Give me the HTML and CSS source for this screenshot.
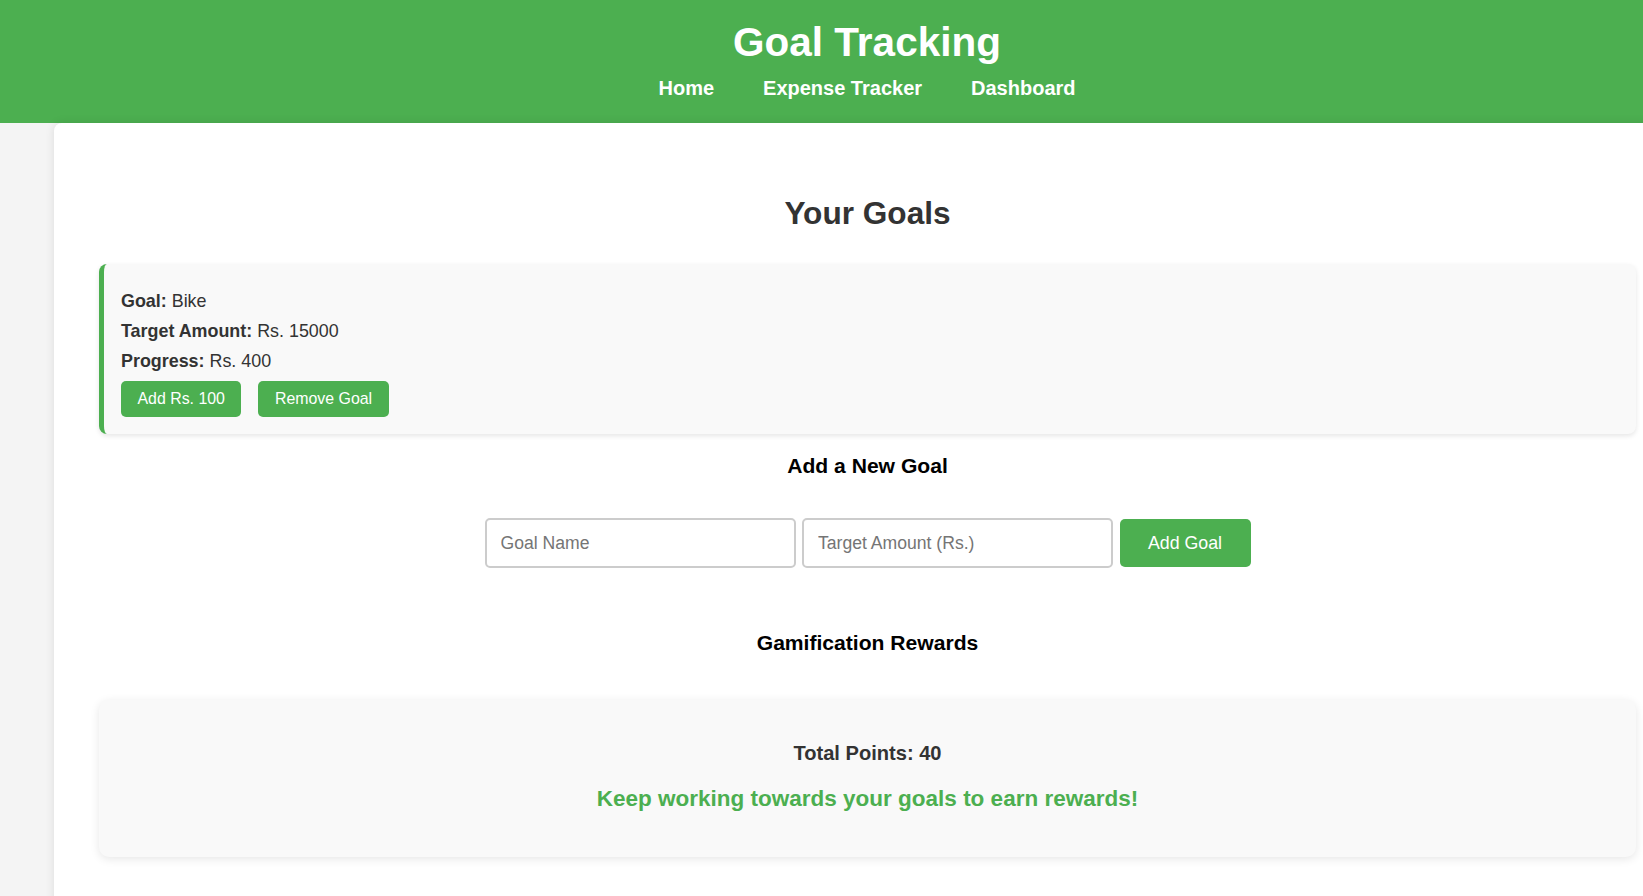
FILE: index.html
```html
<!DOCTYPE html>
<html lang="en">
<head>
<meta charset="utf-8">
<title>Goal Tracking</title>
<link rel="stylesheet" href="styles.css">
</head>
<body>
<div class="page">
  <header class="site-header">
    <h1 class="site-title">Goal Tracking</h1>
    <nav class="site-nav">
      <a href="#" class="nav-link">Home</a>
      <a href="#" class="nav-link">Expense Tracker</a>
      <a href="#" class="nav-link">Dashboard</a>
    </nav>
  </header>
  <main class="container">
    <h2 class="section-title">Your Goals</h2>
    <div class="goal-list">
      <div class="goal-card">
        <p class="goal-line"><strong>Goal:</strong> Bike</p>
        <p class="goal-line"><strong>Target Amount:</strong> Rs. 15000</p>
        <p class="goal-line"><strong>Progress:</strong> Rs. 400</p>
        <div class="goal-actions">
          <button class="btn btn-small">Add Rs. 100</button>
          <button class="btn btn-small">Remove Goal</button>
        </div>
      </div>
    </div>
    <h3 class="sub-title sub-title-add">Add a New Goal</h3>
    <form class="goal-form">
      <input class="text-input" type="text" placeholder="Goal Name">
      <input class="text-input" type="text" placeholder="Target Amount (Rs.)">
      <button class="btn btn-large" type="button">Add Goal</button>
    </form>
    <h3 class="sub-title sub-title-rewards">Gamification Rewards</h3>
    <div class="rewards-card">
      <p class="points">Total Points: 40</p>
      <p class="rewards-msg">Keep working towards your goals to earn rewards!</p>
    </div>
  </main>
</div>
</body>
</html>
```

FILE: styles.css
```css
html, body {
  margin: 0;
  padding: 0;
  overflow: hidden;
}

body {
  background: #f4f4f4;
  font-family: "Liberation Sans", Arial, sans-serif;
  font-size: 17.9px;
  color: #333;
}

.page {
  width: 1734px;
}

.site-header {
  background: #4caf50;
  color: #fff;
  text-align: center;
  padding: 19px 0 23px;
}

.site-title {
  margin: 0 0 12px;
  font-size: 40.5px;
  line-height: 46px;
  font-weight: bold;
}

.site-nav {
  display: flex;
  justify-content: center;
  gap: 49px;
}

.nav-link {
  color: #fff;
  text-decoration: none;
  font-weight: bold;
  font-size: 20px;
  line-height: 23px;
}

.container {
  margin-left: 54px;
  width: 1627px;
  box-sizing: border-box;
  background: #fff;
  border-radius: 8px 8px 0 0;
  box-shadow: 0 0 10px rgba(0, 0, 0, 0.1);
  padding: 72px 45px 60px;
}

.section-title {
  margin: 0 0 33px;
  text-align: center;
  font-size: 31.6px;
  line-height: 36px;
  color: #333;
}

.goal-card {
  background: #f9f9f9;
  border-left: 5px solid #4caf50;
  border-radius: 8px;
  box-shadow: 0 2px 5px rgba(0, 0, 0, 0.1);
  padding: 27px 17px 17px 17px;
  display: flex;
  flex-direction: column;
  gap: 10px;
}

.goal-line {
  margin: 0;
  line-height: 20px;
}

.goal-actions {
  display: flex;
  gap: 17px;
}

.btn {
  background: #4caf50;
  color: #fff;
  border: none;
  font-family: "Liberation Sans", Arial, sans-serif;
  cursor: pointer;
}

.btn-small {
  height: 36px;
  padding: 0 16.5px;
  font-size: 15.9px;
  border-radius: 5px;
}

.btn-large {
  height: 48px;
  width: 131px;
  font-size: 17.8px;
  border-radius: 5px;
}

.sub-title {
  text-align: center;
  color: #000;
  font-size: 21.1px;
  line-height: 24px;
  margin: 0;
}

.sub-title-add {
  margin-top: 20px;
}

.goal-form {
  margin: 40px 0 0;
  display: flex;
  justify-content: center;
  align-items: center;
  gap: 6.5px;
}

.text-input {
  width: 311px;
  height: 50px;
  box-sizing: border-box;
  border: 2px solid #ccc;
  border-radius: 5px;
  padding: 0 14px;
  font-family: "Liberation Sans", Arial, sans-serif;
  font-size: 17.6px;
  color: #333;
  background: #fff;
}

.text-input::placeholder {
  color: #757575;
}

.sub-title-rewards {
  margin-top: 63px;
}

.rewards-card {
  margin-top: 45px;
  background: #f9f9f9;
  border-radius: 10px;
  box-shadow: 0 2px 10px rgba(0, 0, 0, 0.1);
  padding: 42px 20px 46px;
  text-align: center;
}

.points {
  margin: 0 0 21px;
  font-size: 20.1px;
  line-height: 23px;
  font-weight: bold;
  color: #333;
}

.rewards-msg {
  margin: 0;
  font-size: 22.5px;
  line-height: 25px;
  font-weight: bold;
  color: #4caf50;
}
```
